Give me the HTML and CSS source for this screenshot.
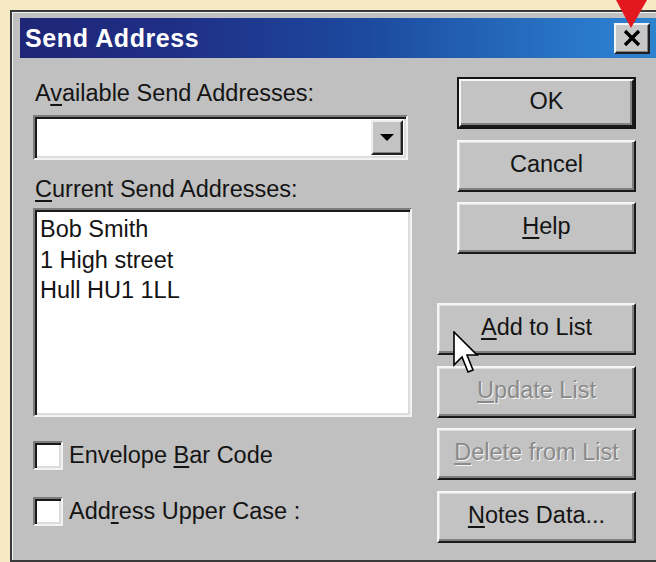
FILE: index.html
```html
<!DOCTYPE html>
<html lang="en">
<head>
<meta charset="utf-8">
<title>Send Address</title>
<link rel="stylesheet" href="styles.css">
</head>
<body>
<div class="window">
  <div class="titlebar">
    <span class="title">Send Address</span>
    <button class="close" aria-label="Close">
      <svg width="20" height="18" viewBox="0 0 20 18"><path d="M3 2 L17 16 M17 2 L3 16" stroke="#000" stroke-width="3.4" fill="none"/></svg>
    </button>
  </div>
  <div class="client">
    <div class="left">
      <label class="label">A<u>v</u>ailable Send Addresses:</label>
      <div class="combo">
        <div class="combo-field"></div>
        <div class="combo-btn">
          <svg width="14" height="8" viewBox="0 0 14 8"><path d="M0 0 H14 L7 7 Z" fill="#000"/></svg>
        </div>
      </div>
      <label class="label label-list"><u>C</u>urrent Send Addresses:</label>
      <div class="listbox">
        <div>Bob Smith</div>
        <div>1 High street</div>
        <div>Hull HU1 1LL</div>
      </div>
      <div class="checks">
        <div class="check"><span class="box"></span><span>Envelope <u>B</u>ar Code</span></div>
        <div class="check"><span class="box"></span><span>Add<u>r</u>ess Upper Case :</span></div>
      </div>
    </div>
    <div class="right">
      <button class="btn btn-short btn-default">OK</button>
      <button class="btn btn-short">Cancel</button>
      <button class="btn btn-short"><u>H</u>elp</button>
      <button class="btn btn-group"><u>A</u>dd to List</button>
      <button class="btn disabled"><u>U</u>pdate List</button>
      <button class="btn disabled"><u>D</u>elete from List</button>
      <button class="btn"><u>N</u>otes Data...</button>
    </div>
  </div>
</div>

<svg class="pointer-arrow" width="40" height="30" viewBox="0 0 40 30"><path d="M0 0 H31 L15 28 Z" fill="#e3171e"/></svg>

<svg class="cursor" width="26" height="44" viewBox="0 0 26 44">
  <path d="M1 1 V34 L9 26 L15 41 L20 39 L14 24 L24 24 Z" fill="#fff" stroke="#000" stroke-width="1.6" stroke-linejoin="miter"/>
</svg>
</body>
</html>
```
FILE: styles.css
```css
html, body {
  margin: 0;
  height: 562px;
  overflow: hidden;
}

body {
  background: #f6eac5;
  padding: 10px 0 0 10px;
  box-sizing: border-box;
  position: relative;
  font-family: "Liberation Sans", Arial, sans-serif;
  font-size: 23.5px;
  color: #141414;
}

u {
  text-decoration-thickness: 2px;
  text-underline-offset: 3px;
}

.window {
  width: 646px;
  height: 552px;
  box-sizing: border-box;
  background: #c0c0c0;
  border-top: 2px solid #3a3a3a;
  border-left: 2px solid #3a3a3a;
  border-bottom: 2px solid #3a3a3a;
  box-shadow: inset 1px 1px 0 #f4f4f4;
  padding: 6px 0 0 8px;
}

.titlebar {
  height: 40px;
  display: flex;
  align-items: center;
  justify-content: space-between;
  background: linear-gradient(90deg, #1f2677 0%, #1f2f86 25%, #1c4a9f 55%, #2a7acb 90%, #2d82cf 100%);
  padding-left: 5px;
}

.title {
  color: #fff;
  font-weight: bold;
  font-size: 25px;
  letter-spacing: 0.6px;
}

.close {
  width: 36px;
  height: 31px;
  margin-right: 6px;
  padding: 0;
  display: flex;
  align-items: center;
  justify-content: center;
  background: #c8c8c8;
  border: 2px solid;
  border-color: #f4f4f4 #202020 #202020 #f4f4f4;
  box-shadow: inset -1px -1px 0 #808080;
}

.client {
  display: flex;
  padding: 19px 0 0 13px;
}

.left {
  width: 379px;
  margin-top: 3px;
  display: flex;
  flex-direction: column;
  align-items: flex-start;
}

.label {
  display: block;
  line-height: 27px;
  padding-left: 2px;
}

.combo {
  margin-top: 8px;
  width: 375px;
  height: 45px;
  box-sizing: border-box;
  display: flex;
  border: 2px solid;
  border-color: #7c7c7c #f2f2f2 #f2f2f2 #7c7c7c;
  box-shadow: inset 2px 2px 0 #1a1a1a, inset -2px -2px 0 #dcdcdc;
  background: #fff;
  padding: 3px 3px 3px 4px;
}

.combo-field {
  flex: 1;
}

.combo-btn {
  width: 32px;
  display: flex;
  align-items: center;
  justify-content: center;
  background: #c4c4c4;
  box-sizing: border-box;
  border: 2px solid;
  border-color: #eeeeee #222 #222 #eeeeee;
  box-shadow: inset -1px -1px 0 #808080;
}

.label-list {
  margin-top: 16px;
}

.listbox {
  margin-top: 5px;
  width: 379px;
  height: 209px;
  box-sizing: border-box;
  background: #fff;
  border: 2px solid;
  border-color: #7c7c7c #f2f2f2 #f2f2f2 #7c7c7c;
  box-shadow: inset 2px 2px 0 #1a1a1a, inset -2px -2px 0 #dcdcdc;
  padding: 4px 5px;
  line-height: 30.5px;
}

.checks {
  margin-top: 24px;
  display: flex;
  flex-direction: column;
  gap: 27px;
}

.check {
  display: flex;
  align-items: center;
  gap: 6px;
  line-height: 27px;
}

.box {
  width: 30px;
  height: 29px;
  box-sizing: border-box;
  background: #fff;
  border: 2px solid;
  border-color: #7c7c7c #f2f2f2 #f2f2f2 #7c7c7c;
  box-shadow: inset 2px 2px 0 #1a1a1a, inset -2px -2px 0 #dcdcdc;
}

.right {
  margin-left: 25px;
  width: 199px;
  display: flex;
  flex-direction: column;
  align-items: flex-end;
  gap: 10.5px;
}

.btn {
  width: 199px;
  height: 52px;
  box-sizing: border-box;
  padding: 0 0 3px;
  font: inherit;
  color: #141414;
  background: #c3c3c3;
  border: 2px solid;
  border-color: #f6f6f6 #1a1a1a #1a1a1a #f6f6f6;
  box-shadow: inset -2px -2px 0 #808080, inset 1px 1px 0 #dedede;
}

.btn-short {
  width: 179px;
}

.btn-default {
  outline: 2px solid #141414;
  outline-offset: 0;
  border-color: #f6f6f6 #1a1a1a #1a1a1a #f6f6f6;
  box-shadow: inset -2px -2px 0 #808080, 0 0 0 2px #141414;
  width: 175px;
  height: 48px;
  margin: 2px 2px 2px 0;
}

.btn-group {
  margin-top: 38.5px;
}

.btn.disabled {
  color: #8a8a8a;
  text-shadow: 1px 1px 0 #f4f4f4;
}

.pointer-arrow {
  position: absolute;
  left: 616px;
  top: 0;
}

.cursor {
  position: absolute;
  left: 453px;
  top: 331px;
}
```
